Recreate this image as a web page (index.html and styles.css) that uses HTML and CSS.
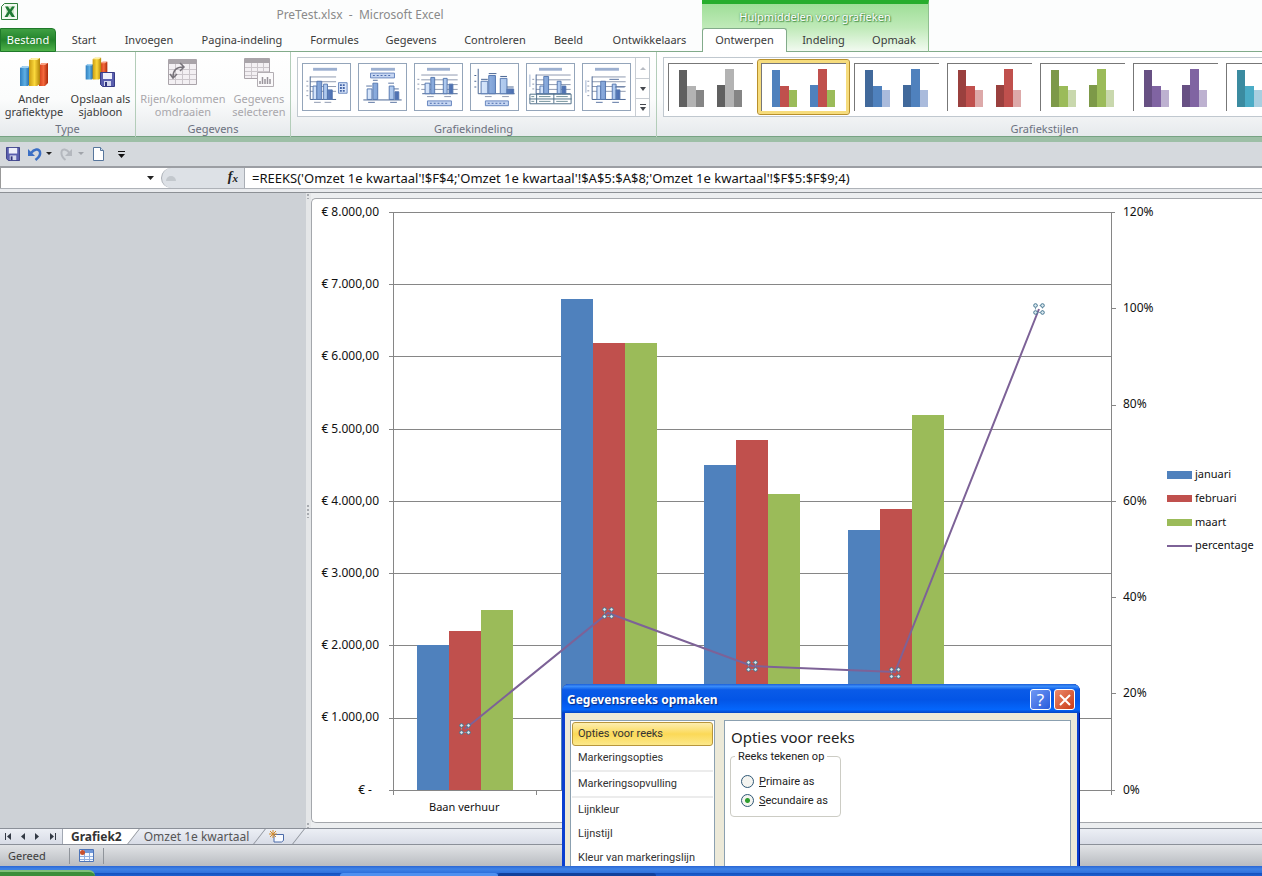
FILE: index.html
```html
<!DOCTYPE html>
<html lang="nl">
<head>
<meta charset="utf-8">
<title>PreTest.xlsx - Microsoft Excel</title>
<link rel="stylesheet" href="styles.css">
</head>
<body>
<svg class="defs" aria-hidden="true">
  <defs>
    <linearGradient id="gBlue"><stop offset="0" stop-color="#2f7fc0"/><stop offset=".5" stop-color="#5fb0e4"/><stop offset="1" stop-color="#1d5f9c"/></linearGradient>
    <linearGradient id="gYellow"><stop offset="0" stop-color="#c99a10"/><stop offset=".5" stop-color="#fbd83c"/><stop offset="1" stop-color="#b28408"/></linearGradient>
    <linearGradient id="gRed"><stop offset="0" stop-color="#d03c18"/><stop offset=".5" stop-color="#f4683c"/><stop offset="1" stop-color="#a82808"/></linearGradient>
    <linearGradient id="gLight"><stop offset="0" stop-color="#d9e7fb"/><stop offset="1" stop-color="#a9c5ec"/></linearGradient>
    <linearGradient id="gDark"><stop offset="0" stop-color="#8fb0e0"/><stop offset="1" stop-color="#4a6db0"/></linearGradient>
    <symbol id="bars3d" viewBox="0 0 30 31">
      <path d="M1 11l3-2h7v18l-2 2H1z" fill="url(#gBlue)"/><path d="M1 11l3-2h7l-2 2z" fill="#9fd0f2"/>
      <path d="M20 8l3-2h6v20l-3 3h-6z" fill="url(#gRed)"/><path d="M20 8l3-2h6l-3 2z" fill="#f9a184"/>
      <path d="M10 3l3-2h8v26l-3 2h-8z" fill="url(#gYellow)"/><path d="M10 3l3-2h8l-3 2z" fill="#fdf0a0"/>
    </symbol>
    <symbol id="floppy" viewBox="0 0 15 15">
      <path d="M.5.5h14v14h-12l-2-2z" fill="#5a5fae" stroke="#383c86"/><path d="M3 1h9v6H3z" fill="#eef0fa"/><path d="M4 9h7v5H4z" fill="#d4d8ee"/><path d="M5 10h2v4H5z" fill="#30347c"/>
    </symbol>
    <symbol id="style" viewBox="0 0 84 47">
      <path class="a" d="M10 6h8v37h-8zM48 21h8v22h-8z"/><path class="b" d="M18 22h9v21h-9zM56 5h9v38h-9z"/><path class="c" d="M27 26h8v17h-8zM65 26h8v17h-8z"/>
    </symbol>
    <symbol id="handle" viewBox="0 0 12 12">
      <path d="M2.500 2.500h7v7h-7z" fill="none" stroke="#7fa0b2" stroke-dasharray="2 2"/>
      <g fill="#dceaf1" stroke="#44748f"><circle cx="2.500" cy="2.500" r="1.800"/><circle cx="9.500" cy="2.500" r="1.800"/><circle cx="2.500" cy="9.500" r="1.800"/><circle cx="9.500" cy="9.500" r="1.800"/></g>
    </symbol>
  </defs>
</svg>

<div class="app">
<header class="top">
  <div class="top-main">
    <div class="titlebar">
      <svg class="logo" viewBox="0 0 17 17" width="17" height="17"><path d="M3.500 .5h13v16H.5v-13z" fill="#f3faf2" stroke="#2f7d3a"/><path d="M5 3h8v11H5z" fill="#cfe8c9"/><path d="M4 3.500h3l2 3 2-3h3L10.500 8.500 14 14h-3.200L8.500 10.500 6.500 14H3.500L7 8.500z" fill="#1f7a35"/></svg>
      <h1>PreTest.xlsx &nbsp;- &nbsp;Microsoft Excel</h1>
    </div>
    <nav class="tabs">
      <button class="tab file">Bestand</button><button class="tab">Start</button><button class="tab">Invoegen</button><button class="tab">Pagina-indeling</button><button class="tab">Formules</button><button class="tab">Gegevens</button><button class="tab">Controleren</button><button class="tab">Beeld</button><button class="tab">Ontwikkelaars</button>
    </nav>
  </div>
  <div class="context">
    <div class="context-title">Hulpmiddelen voor grafieken</div>
    <nav class="context-tabs"><button class="tab active">Ontwerpen</button><button class="tab">Indeling</button><button class="tab">Opmaak</button></nav>
  </div>
  <div class="top-rest"></div>
</header>

<section class="ribbon">
  <div class="group type">
    <div class="group-body">
      <button class="big"><svg width="30" height="31"><use href="#bars3d"/></svg><span>Ander<br>grafiektype</span></button>
      <button class="big"><svg width="32" height="31" viewBox="0 0 32 31"><use href="#bars3d" width="25" height="24"/><use href="#floppy" x="16" y="15" width="15" height="15"/></svg><span>Opslaan als<br>sjabloon</span></button>
    </div>
    <h2>Type</h2>
  </div>
  <div class="group data">
    <div class="group-body">
      <button class="big" disabled><svg width="30" height="31" viewBox="0 0 30 31"><path d="M.5 2.500h28v25H.5z" fill="#f3f0f3" stroke="#aaa4aa"/><path d="M1 3h27v4H1z" fill="#a9a4a9"/><path d="M1 12.500h27M1 17.500h27M1 22.500h27M7.500 7v20M14.500 7v20M21.500 7v20" stroke="#cbc6cb" fill="none"/><path d="M5 20c0-7 3-10 10-10M12 6l4 4-4 4M2 17l3 4 4-4" fill="none" stroke="#77737a" stroke-width="1.500"/></svg><span>Rijen/kolommen<br>omdraaien</span></button>
      <button class="big" disabled><svg width="30" height="31" viewBox="0 0 30 31"><path d="M.5 1.500h25v20H.5z" fill="#f3f0f3" stroke="#aaa4aa"/><path d="M1 2h24v4H1z" fill="#a9a4a9"/><path d="M1 10.500h24M1 14.500h24M1 18.500h24M7.500 6v15M13.500 6v15M19.500 6v15" stroke="#cbc6cb" fill="none"/><path d="M13.500 15.500h16v14h-16z" fill="#fbfafb" stroke="#b3aeb3"/><path d="M16 27v-3M18.500 27v-7M21 27v-5M23.500 27v-7M26 27v-5" stroke="#99949b" stroke-width="1.500"/></svg><span>Gegevens<br>selecteren</span></button>
    </div>
    <h2>Gegevens</h2>
  </div>
  <div class="group layouts">
    <div class="group-body">
      <div class="gallery">
        <div class="thumbs">
          <button class="thumb" aria-label="Indeling 1"><svg viewBox="0 0 48 48"><path d="M10 4h25v3H10z" fill="#9db0d0"/><path d="M7 13.500h27M7 18.500h27M7 23.500h27M7 28.500h27M3 18h2M3 23h2M3 28h2M3 33h2" stroke="#8b97ad"/><path d="M7 13v24h27" fill="none" stroke="#43608f"/><g stroke="#5577b0"><path d="M10 23h4v14h-4zM21 21h4v16h-4z" fill="url(#gLight)"/><path d="M14 18h5v19h-5zM25 27h5v10h-5z" fill="url(#gDark)"/></g><path d="M36.500 19.500h9v11h-9z" fill="#dbe7fa" stroke="#6585bd"/><path d="M38 22h6M38 25h6M38 28h6" stroke="#4565a8" stroke-width="2" stroke-dasharray="2 1"/><path d="M11 40h7M22 40h7" stroke="#8b97ad"/></svg></button>
          <button class="thumb" aria-label="Indeling 2"><svg viewBox="0 0 48 48"><path d="M12 4h25v3H12z" fill="#9db0d0"/><path d="M11.500 9.500h25v5h-25z" fill="#c6d6f2" stroke="#6585bd"/><path d="M14 12h20" stroke="#4565a8" stroke-dasharray="2 2"/><path d="M4 37.500h40" stroke="#43608f"/><g stroke="#5577b0"><path d="M8 26h5v11H8zM31 23h5v14h-5z" fill="url(#gLight)"/><path d="M14 20h5v17h-5zM37 29h4v8h-4z" fill="url(#gDark)"/></g><path d="M7 23h6M14 17h5M30 20h6M36 26h5M9 40h7M32 40h7" stroke="#56719f"/></svg></button>
          <button class="thumb" aria-label="Indeling 3"><svg viewBox="0 0 48 48"><path d="M12 4h24v3H12z" fill="#9db0d0"/><path d="M6 11.500h38M6 16.500h38M6 21.500h38M6 26.500h38M2 16h2M2 21h2M2 26h2" stroke="#8b97ad"/><path d="M7 31h37" fill="none" stroke="#43608f"/><g stroke="#5577b0"><path d="M10 20h5v11h-5zM29 15h4v16h-4z" fill="url(#gLight)"/><path d="M16 14h4v17h-4zM35 21h4v10h-4z" fill="url(#gDark)"/></g><path d="M12.500 38.500h25v5h-25z" fill="#c6d6f2" stroke="#6585bd"/><path d="M15 41h20" stroke="#4565a8" stroke-dasharray="2 2"/><path d="M12 34h7M30 34h7" stroke="#8b97ad"/></svg></button>
          <button class="thumb" aria-label="Indeling 4"><svg viewBox="0 0 48 48"><path d="M7 5v26h38M3 12h2M3 18h2M3 24h2" fill="none" stroke="#43608f"/><g stroke="#5577b0"><path d="M10 18h7v13h-7zM30 15h7v16h-7z" fill="url(#gLight)"/><path d="M18 12h7v19h-7zM37 26h7v5h-7z" fill="url(#gDark)"/></g><path d="M10 16h7M18 10h8M30 13h7M37 24h7" stroke="#43608f"/><path d="M14.500 38.500h24v5h-24z" fill="#c6d6f2" stroke="#6585bd"/><path d="M17 41h20" stroke="#4565a8" stroke-dasharray="2 2"/><path d="M14 34h7M32 34h7" stroke="#8b97ad"/></svg></button>
          <button class="thumb" aria-label="Indeling 5"><svg viewBox="0 0 48 48"><path d="M12 4h24v3H12z" fill="#9db0d0"/><path d="M9 11.500h36M9 16.500h36M9 21.500h36M9 26.500h36M5 16h2M5 21h2M5 26h2" stroke="#8b97ad"/><path d="M2 11h1v13H2z" fill="#9db0d0"/><path d="M9 11v20h36" fill="none" stroke="#43608f"/><g stroke="#5577b0"><path d="M13 23h4v8h-4zM31 18h4v13h-4z" fill="url(#gLight)"/><path d="M17 13h5v18h-5zM36 23h4v8h-4z" fill="url(#gDark)"/></g><path d="M2.500 31.500h43v10h-43zM2 36.500h44M9.500 31v10M27.500 31v10" fill="none" stroke="#4e6f88"/><path d="M12 34h12M30 34h12M12 39h12M30 39h12M4 34h3M4 39h3" stroke="#6f8f98"/></svg></button>
          <button class="thumb" aria-label="Indeling 6"><svg viewBox="0 0 48 48"><path d="M12 4h25v3H12z" fill="#9db0d0"/><path d="M9 13.500h35M9 18.500h35M9 23.500h35M9 28.500h35M4 18h2M4 23h2M4 28h2M4 33h2" stroke="#8b97ad"/><path d="M2 17h1v13H2z" fill="#9db0d0"/><path d="M9 13v24h35" fill="none" stroke="#43608f"/><g stroke="#5577b0"><path d="M14 23h4v14h-4zM30 21h4v16h-4z" fill="url(#gLight)"/><path d="M18 18h5v19h-5zM34 27h4v10h-4z" fill="url(#gDark)"/></g><path d="M27 16h10M33 24h10M13 40h7M30 40h7" stroke="#56719f"/></svg></button>
        </div>
        <div class="scroll">
          <button disabled aria-label="Omhoog"><svg width="6" height="4"><path d="M0 4l3-3 3 3z" fill="#b8bcc4"/></svg></button>
          <button aria-label="Omlaag"><svg width="6" height="4"><path d="M0 0h6L3 4z" fill="#45484f"/></svg></button>
          <button aria-label="Meer"><svg width="8" height="7"><path d="M1 0h6v1H1zM1 3h6L4 7z" fill="#45484f"/></svg></button>
        </div>
      </div>
    </div>
    <h2>Grafiekindeling</h2>
  </div>
  <div class="styles-clip">
  <div class="group styles">
    <div class="group-body">
      <div class="gallery wide">
        <button class="swatch gray" aria-label="Stijl 1"><svg><use href="#style"/></svg></button>
        <button class="swatch multi selected" aria-label="Stijl 2"><svg><use href="#style"/></svg></button>
        <button class="swatch blue" aria-label="Stijl 3"><svg><use href="#style"/></svg></button>
        <button class="swatch red" aria-label="Stijl 4"><svg><use href="#style"/></svg></button>
        <button class="swatch green" aria-label="Stijl 5"><svg><use href="#style"/></svg></button>
        <button class="swatch purple" aria-label="Stijl 6"><svg><use href="#style"/></svg></button>
        <button class="swatch aqua" aria-label="Stijl 7"><svg><use href="#style"/></svg></button>
      </div>
    </div>
    <h2>Grafiekstijlen</h2>
  </div>
  </div>
</section>

<div class="quick">
  <button aria-label="Opslaan"><svg width="14" height="14"><use href="#floppy"/></svg></button>
  <button class="undo" aria-label="Ongedaan maken"><svg width="24" height="14" viewBox="0 0 24 14"><path d="M0 2v7h7z" fill="#3b6fc4"/><path d="M3 6C6 2 11 1 12 5S10 11 7.500 13" fill="none" stroke="#3b6fc4" stroke-width="2.500"/><path d="M18 5h6l-3 3z" fill="#222"/></svg></button>
  <button class="redo" aria-label="Opnieuw" disabled><svg width="24" height="14" viewBox="0 0 24 14"><path d="M12 2v7H5z" fill="#b4b8be"/><path d="M9.500 6C7 2 2 1 1.500 5S3 11 5.500 13" fill="none" stroke="#b4b8be" stroke-width="2"/><path d="M18 5h6l-3 3z" fill="#a0a4aa"/></svg></button>
  <button class="new" aria-label="Nieuw"><svg width="11" height="14" viewBox="0 0 11 14"><path d="M.5.5h7l3 3v10H.5z" fill="#fff" stroke="#57769c"/><path d="M7.500.5v3h3" fill="#cfdcec" stroke="#57769c"/></svg></button>
  <button aria-label="Aanpassen"><svg width="7" height="7"><path d="M0 0h7v1H0zM0 3h7L3.500 7z" fill="#111"/></svg></button>
</div>

<div class="formula">
  <div class="namebox"><input aria-label="Naamvak"><svg width="7" height="4"><path d="M0 0h7L3.500 4z" fill="#222"/></svg></div>
  <div class="fx"><span class="knob"></span><button aria-label="Functie invoegen"><i>f</i><i class="x">x</i></button></div>
  <input class="expr" aria-label="Formule" value="=REEKS('Omzet 1e kwartaal'!$F$4;'Omzet 1e kwartaal'!$A$5:$A$8;'Omzet 1e kwartaal'!$F$5:$F$9;4)">
</div>

<main class="work">
  <div class="gutter"></div>
  <div class="splitter"><span></span><span class="mid"></span><span></span></div>
  <div class="sheet">
  <svg class="chart" viewBox="312 199 950 623" role="img" aria-label="Omzet per maand">
    <path class="grid" d="M389 212.500h726M389 284.500h722M389 356.500h722M389 429.500h722M389 501.500h722M389 573.500h722M389 645.500h722M389 718.500h722M389 790.500h726M393.500 212v583M1111.500 212v583M536.500 790v5M680.500 790v5M824.500 790v5M967.500 790v5M1111 308.500h5M1111 405.500h5M1111 501.500h5M1111 597.500h5M1111 693.500h5"/>
    <path fill="#4f81bd" d="M417 645h32v145h-32zM561 299h32v491h-32zM704 465h32v325h-32zM848 530h32v260h-32z"/>
    <path fill="#c0504d" d="M449 631h32v159h-32zM593 343h32v447h-32zM736 440h32v350h-32zM880 509h32v281h-32z"/>
    <path fill="#9bbb59" d="M481 610h32v180h-32zM625 343h32v447h-32zM768 494h32v296h-32zM912 415h32v375h-32z"/>
    <path d="M465 729L608 613 752 666 895 672 1039 309" fill="none" stroke="#7d6297" stroke-width="2"/>
    <use href="#handle" x="459" y="723" width="12" height="12"/><use href="#handle" x="602" y="607" width="12" height="12"/><use href="#handle" x="746" y="660" width="12" height="12"/><use href="#handle" x="889" y="667" width="12" height="12"/><use href="#handle" x="1033" y="303" width="12" height="12"/>
    <g class="label num end"><text x="379" y="216">€ 8.000,00</text><text x="379" y="288">€ 7.000,00</text><text x="379" y="360">€ 6.000,00</text><text x="379" y="433">€ 5.000,00</text><text x="379" y="505">€ 4.000,00</text><text x="379" y="577">€ 3.000,00</text><text x="379" y="649">€ 2.000,00</text><text x="379" y="721">€ 1.000,00</text><text x="372" y="794">€ -</text></g>
    <g class="label num"><text x="1123" y="216">120%</text><text x="1123" y="312">100%</text><text x="1123" y="408">80%</text><text x="1123" y="505">60%</text><text x="1123" y="601">40%</text><text x="1123" y="697">20%</text><text x="1123" y="794">0%</text></g>
    <g class="label"><text x="429" y="811">Baan verhuur</text>
    <text x="1195" y="478">januari</text><text x="1195" y="502">februari</text><text x="1195" y="526">maart</text><text x="1195" y="549">percentage</text></g>
    <path fill="#4f81bd" d="M1167 471h25v8h-25z"/><path fill="#c0504d" d="M1167 495h25v7h-25z"/><path fill="#9bbb59" d="M1167 519h25v7h-25z"/><path fill="#7d6297" d="M1167 545h25v2h-25z"/>
  </svg>
  </div>
</main>

<div class="sheets">
  <div class="nav">
    <button aria-label="Eerste"><svg width="7" height="7"><path d="M0 0h1v7H0zM6 0v7L2 3.500z"/></svg></button>
    <button aria-label="Vorige"><svg width="7" height="7"><path d="M5 0v7L1 3.500z"/></svg></button>
    <button aria-label="Volgende"><svg width="7" height="7"><path d="M1 0v7l4-3.500z"/></svg></button>
    <button aria-label="Laatste"><svg width="7" height="7"><path d="M6 0h1v7H6zM1 0v7l4-3.500z"/></svg></button>
  </div>
  <button class="sheet-tab current">Grafiek2</button>
  <button class="sheet-tab">Omzet 1e kwartaal</button>
  <button class="sheet-tab add" aria-label="Werkblad invoegen"><svg width="16" height="13" viewBox="0 0 16 13"><path d="M5 4.500h9.500v6l-2 1.500H5z" fill="#f6f9ff" stroke="#4a6aa8"/><path d="M4 0v8M0 4h8M1 1l6 6M7 1L1 7" stroke="#d28a2c"/></svg></button>
</div>

<footer class="status"><span class="ready">Gereed</span><button class="macro" aria-label="Macro opnemen"><svg width="15" height="13" viewBox="0 0 15 13"><path d="M.5.500h14v12H.5z" fill="#f4f8ff" stroke="#4d74b8"/><path d="M5 1h9v3H5z" fill="#6f97d8"/><path d="M1 7.500h13M1 10.500h13M5.500 4v8M10.500 4v8" stroke="#8fafe0"/><circle cx="3.500" cy="3.500" r="2.500" fill="#c8502c"/></svg></button></footer>
<div class="taskbar"><span class="start"></span><span class="task"></span><span class="task pressed"></span></div>

<section class="dialog" role="dialog" aria-labelledby="dlg-title">
  <header><h2 id="dlg-title">Gegevensreeks opmaken</h2>
    <button class="help" aria-label="Help">?</button>
    <button class="close" aria-label="Sluiten"><svg width="12" height="12"><path d="M1 1l10 10M11 1L1 11" stroke="#fff" stroke-width="2"/></svg></button></header>
  <div class="dialog-body">
    <nav class="options"><button class="on">Opties voor reeks</button><button>Markeringsopties</button><hr><button>Markeringsopvulling</button><hr><button>Lijnkleur</button><button>Lijnstijl</button><button>Kleur van markeringslijn</button></nav>
    <div class="pane">
      <h3>Opties voor reeks</h3>
      <fieldset><legend>Reeks tekenen op</legend>
        <label><input type="radio" name="axis"><span><u>P</u>rimaire as</span></label>
        <label><input type="radio" name="axis" checked><span><u>S</u>ecundaire as</span></label>
      </fieldset>
    </div>
  </div>
</section>
</div>
</body>
</html>
```

FILE: styles.css
```css
* { box-sizing: border-box; }
body { margin: 0; font: 11px/13px "Noto Sans", "Open Sans", sans-serif; color: #3b3b3b; background: #cdd1d6; }
button { margin: 0; padding: 0; border: 0; background: none; font: inherit; color: inherit; }
h1, h2, h3 { margin: 0; font-size: 11px; font-weight: normal; }
svg { display: block; }
.defs { position: absolute; width: 0; height: 0; }
.app { position: relative; display: flex; flex-direction: column; min-height: 100vh; overflow: hidden; }

.top { display: flex; height: 52px; background: #fcfdfd; }
.top-main { flex: none; display: flex; flex-direction: column; }
.titlebar { flex: 1; display: flex; align-items: center; padding-left: 1px; }
.titlebar .logo { margin-bottom: 6px; }
.titlebar h1 { flex: 1; padding-top: 2px; text-align: center; color: #8a8a8a; font-size: 12px; line-height: 16px; }
.tabs { display: grid; grid-template-columns: 57px 54px 76px 110px 75px 78px 90px 57px 105px; height: 24px; border-bottom: 1px solid #82ab8a; }
.tab { padding-bottom: 1px; text-align: center; white-space: nowrap; }
.tab.file { margin-right: 1px; margin-bottom: -1px; border: 1px solid #1f7a2a; border-radius: 0 4px 0 0; color: #fff; background: linear-gradient(#3f9f43, #23832b 50%, #4fb24a); }
.context { flex: none; width: 227px; display: flex; flex-direction: column; border-top: 4px solid #27ad2d; border-right: 1px solid #8fc08f; background: linear-gradient(#9fde98, #c0eab9 50%, #f4fbf3); }
.context-title { flex: 1; display: flex; align-items: center; justify-content: center; color: #fff; text-shadow: 0 0 2px #3f8a3f, 1px 1px 1px #4b944b; }
.context-tabs { display: grid; grid-template-columns: 85px 73px 1fr; height: 24px; border-bottom: 1px solid #82ab8a; }
.tab.active { margin-bottom: -1px; padding-bottom: 3px; border: 1px solid #82ab8a; border-bottom: 0; border-radius: 3px 3px 0 0; background: #fff; }
.top-rest { flex: 1; border-bottom: 1px solid #82ab8a; }

.ribbon { display: flex; height: 90px; background: linear-gradient(#fff, #fbfcfc 55%, #e6e9ec); border-bottom: 5px solid #9dbfa6; box-shadow: inset 0 -1px #77a383; overflow: hidden; }
.group { flex: none; display: flex; flex-direction: column; height: 85px; border-right: 1px solid #b3cdb9; }
.group h2 { height: 16px; text-align: center; color: #6c7180; line-height: 16px; }
.group-body { flex: 1; display: flex; padding: 5px 0 0 6px; }
.type { width: 136px; }
.data { width: 155px; }
.layouts { width: 366px; }
.styles-clip { flex: 1; min-width: 0; overflow: hidden; }
.styles { width: 776px; }
.type .group-body, .data .group-body { justify-content: space-around; padding: 5px 1px 0; }
.big { display: flex; flex-direction: column; align-items: center; white-space: nowrap; }
.big:disabled { color: #a9a7ab; }
.big span { margin-top: 4px; }
.gallery { display: flex; height: 60px; border: 1px solid #c0c8cf; background: #fff; }
.thumbs { display: flex; gap: 7px; padding: 5px 4px; }
.thumb { width: 49px; height: 48px; border: 1px solid #94a5ba; }
.thumb svg { width: 100%; height: 100%; }
.scroll { width: 14px; display: grid; grid-template-rows: 20px 20px 1fr; border-left: 1px solid #c8cdd3; }
.scroll button { display: grid; place-items: center; }
.scroll button + button { border-top: 1px solid #c8cdd3; }
.wide { padding: 1px 0 0 0; border-right: 0; width: 776px; }
.swatch { flex: none; width: 93px; height: 56px; padding: 4px; border: 0 solid transparent; }
.swatch svg { width: 85px; height: 48px; border-top: 1px solid #777; border-left: 1px solid #777; }
.swatch.selected { border: 1px solid #b8902c; border-radius: 3px; padding: 3px; background: #fff; box-shadow: inset 0 0 0 3px #f6dc7c; }
.a { fill: var(--a); } .b { fill: var(--b); } .c { fill: var(--c); }
.gray { --a: #606060; --b: #b3b3b3; --c: #858585; }
.multi { --a: #4f81bd; --b: #c0504d; --c: #9bbb59; }
.blue { --a: #41699b; --b: #4f81bd; --c: #aabbdc; }
.red { --a: #9a403e; --b: #c0504d; --c: #dda9a9; }
.green { --a: #7d9948; --b: #9bbb59; --c: #c9d8ad; }
.purple { --a: #675083; --b: #8064a2; --c: #bdb1d0; }
.aqua { --a: #3b8ba0; --b: #4bacc6; --c: #a9cfe0; }

.quick { display: flex; align-items: center; height: 24px; padding-left: 6px; background: #d5d9dd; }
.undo { margin-left: 8px; }
.redo { margin-left: 8px; }
.new { margin: 0 14px 0 9px; }

.formula { display: flex; height: 27px; border-top: 2px solid #9b9ea3; border-bottom: 1px solid #8c9095; box-shadow: inset 0 -3px #e9ebee, inset 0 -4px #aeb2b8; padding-bottom: 4px; background: #fff; }
.formula input { border: 0; outline: 0; background: none; font: 13px/18px "Noto Sans", sans-serif; color: #111; padding: 0; }
.namebox { width: 161px; display: flex; align-items: center; border-left: 1px solid #999; }
.namebox input { flex: 1; min-width: 0; }
.namebox svg { margin-right: 7px; }
.fx { width: 84px; display: flex; align-items: center; justify-content: space-between; padding: 0 6px 0 4px; border: 1px solid #a9aeb5; border-width: 0 1px 0 1px; border-radius: 10px 0 0 10px; background: #dde1e6; }
.knob { width: 10px; height: 5px; border-radius: 5px 5px 0 0; background: #c3c8cd; }
.fx button { display: flex; font: bold 14px/16px "Liberation Serif", serif; color: #222; }
.fx .x { font-size: 11px; line-height: 19px; }
.formula .expr { flex: 1; min-width: 0; padding-left: 7px; }

.work { flex: 1; display: flex; min-height: 0; }
.gutter { flex: none; width: 306px; background: #cdd1d6; }
.splitter { flex: none; width: 5px; display: flex; flex-direction: column; justify-content: space-between; background: #e4e6e8; }
.splitter span { height: 6px; background: radial-gradient(#a8abb0 1px, transparent 1px) 0 0 / 4px 4px; }
.splitter .mid { height: 14px; }
.sheet { flex: 1; min-width: 0; padding: 5px 0; background: #eceef0; }
.chart { width: 100%; border: 1px solid #a4a7ac; border-width: 1px 0 1px 1px; border-radius: 5px 0 0 5px; background: #fff; }
.grid { fill: none; stroke: #868686; }
.label { font: 11px "Noto Sans", sans-serif; fill: #111; }
.num { font-size: 12px; }
.end { text-anchor: end; }

.sheets { display: flex; height: 17px; border-top: 1px solid #8b9099; border-bottom: 1px solid #8b9099; background: linear-gradient(#eceff5, #d8dce6); }
.nav { width: 63px; display: flex; justify-content: space-between; padding: 0 6px 0 5px; border-right: 1px solid #a2a8b3; fill: #333a45; }
.sheet-tab { position: relative; z-index: 0; padding: 0 14px 0 6px; font-size: 12px; line-height: 14px; color: #555; white-space: nowrap; }
.sheet-tab::after { content: ""; position: absolute; z-index: -1; inset: 0 4px 0 0; border-right: 1px solid #8b9099; transform: skewX(-38deg); }
.sheet-tab.current { padding: 0 16px 0 8px; font-weight: bold; color: #333; background: linear-gradient(90deg, #fff 60px, transparent 60px); }
.sheet-tab.current::after { left: 20px; background: #fff; }
.sheet-tab.add { padding: 0 18px 0 6px; }

.status { display: flex; align-items: center; height: 21px; background: linear-gradient(#e1e3e6, #b9bcc1); }
.ready { width: 69px; padding-left: 8px; }
.macro { width: 35px; height: 16px; display: grid; place-items: center; border: 1px solid #8f949b; border-width: 0 1px; }
.taskbar { display: flex; align-items: flex-end; height: 10px; background: linear-gradient(#2a66d4, #3f83e6 30%, #2f72dd 65%, #1552c0 75%, #1c5fd0); }
.start { width: 95px; height: 6px; border-top: 2px solid #7fc07a; border-radius: 0 6px 0 0; background: #3b8e3b; }
.task { width: 158px; height: 3px; margin-left: 245px; border-radius: 3px 3px 0 0; background: #4f90f0; }
.task.pressed { margin-left: 0; background: #10409c; }

.dialog { position: absolute; left: 562px; top: 684px; bottom: 10px; width: 518px; display: flex; flex-direction: column; padding: 0 3px; border-radius: 7px 7px 0 0; background: #0a3fd0; overflow: hidden; box-shadow: inset -1px 0 #00137f; color: #333; }
.dialog header { flex: none; display: flex; align-items: center; gap: 3px; height: 29px; margin: 0 -3px; padding: 2px 5px 0 5px; background: linear-gradient(#1a5fd8, #3b8dfa 8%, #0a5be8 20%, #0355e6 55%, #0466fc 88%, #0345c4); color: #fff; }
.dialog header h2 { flex: 1; font-size: 12px; line-height: 16px; font-weight: bold; text-shadow: 1px 1px 1px #0a2a80; }
.help, .close { width: 21px; height: 21px; display: grid; place-items: center; border: 1px solid #fff; border-radius: 3px; }
.help { background: linear-gradient(135deg, #6f98f4, #2a5bdc); font-size: 17px; line-height: 18px; }
.close { background: linear-gradient(135deg, #ec8a6c, #c93a16); }
.dialog-body { flex: 1; display: flex; gap: 9px; min-height: 0; padding: 7px 6px 0 5px; background: #ece9d8; }
.options { width: 145px; border: 1px solid #8ba0b0; border-bottom: 0; padding: 1px; background: #fff; overflow: hidden; }
.options button { display: block; width: 100%; height: 24px; padding-left: 6px; text-align: left; font: 11px/24px Roboto, "Liberation Sans", sans-serif; white-space: nowrap; }
.options hr { margin: 0; height: 2px; border: 0; background: #ececec; }
.options .on { border: 1px solid #b8963c; border-radius: 3px; padding-left: 5px; line-height: 22px; background: linear-gradient(#fdeeb0, #fbd957 50%, #fce88a); }
.pane { flex: 1; padding: 6px 5px 0; border: 1px solid #8ba0b0; border-bottom: 0; background: #fff; color: #222; }
.pane h3 { font-size: 15px; line-height: 20px; padding-left: 1px; }
.pane fieldset { width: 111px; margin: 3px 0 0; padding: 9px 0 6px 10px; border: 1px solid #ccccc4; border-radius: 4px; }
.pane legend { margin-left: -6px; padding: 0 3px; }
.pane label { display: flex; align-items: center; gap: 5px; height: 19px; white-space: nowrap; }
.pane legend, .pane label { font: 11px/13px Roboto, "Liberation Sans", sans-serif; }
.pane input { appearance: none; width: 13px; height: 13px; margin: 0; border: 1px solid #2f5876; border-radius: 50%; background: #f4f4f0; }
.pane input:checked { background: radial-gradient(circle, #2f9e2f 2px, #f4f4f0 3px); }
```
